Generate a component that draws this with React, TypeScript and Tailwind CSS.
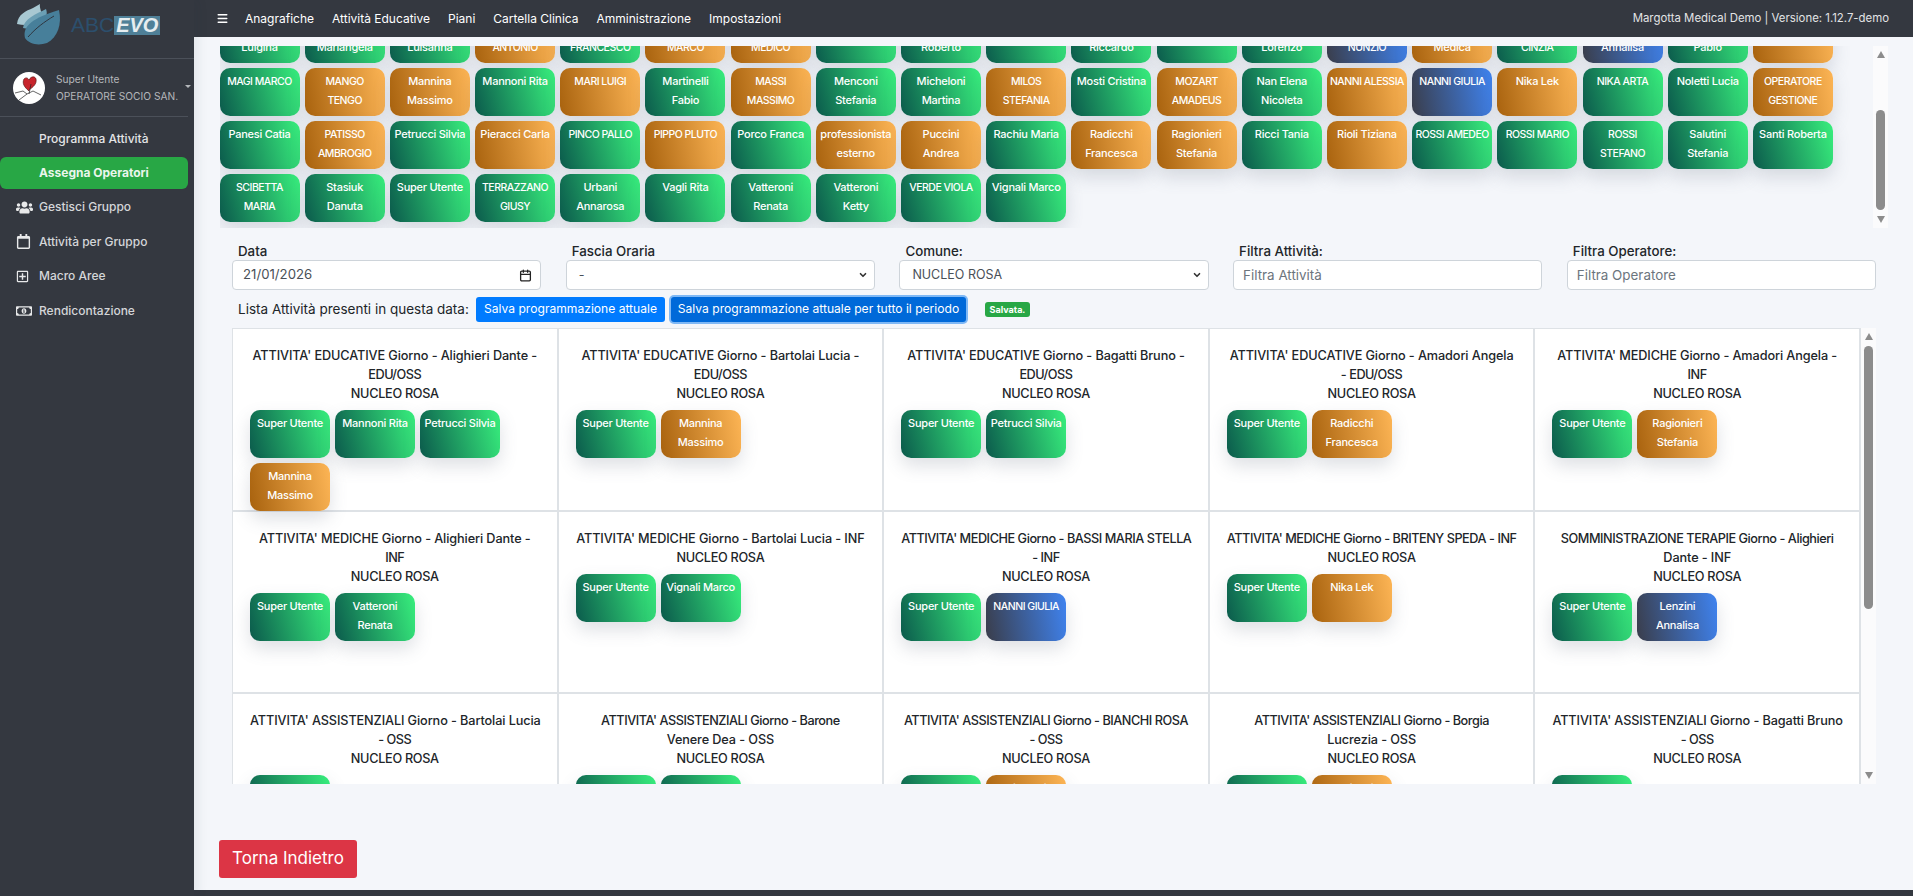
import React from "react";
import { Menu, Calendar, ChevronDown } from "lucide-react";
import { FaUsers, FaRegCalendar, FaRegPlusSquare, FaRegMoneyBillAlt } from "react-icons/fa";

type Tone = "g" | "o" | "b";
type Chip = { lines: string[]; tone: Tone };

const toneClass: Record<Tone, string> = {
  g: "bg-[linear-gradient(75deg,#0b5a4c,#38ef7d)]",
  o: "bg-[linear-gradient(80deg,#a8620e,#fdb555)]",
  b: "bg-[linear-gradient(80deg,#3a3d4a,#3f83f0)]",
};

const c = (text: string, tone: Tone = "g"): Chip => ({ lines: text.split("|"), tone });

const operatorRows: Chip[][] = [
  [
    c(" |Luigina"), c(" |Mariangela"), c(" |Luisanna"), c(" |ANTONIO", "o"), c(" |FRANCESCO"), c(" |MARCO", "o"),
    c(" |MEDICO", "o"), c(" | "), c(" |Roberto"), c(" | "), c(" |Riccardo"), c(" | "), c(" |Lorenzo"),
    c(" |NUNZIO", "b"), c(" |Medica", "o"), c(" |CINZIA"), c(" |Annalisa", "b"), c(" |Pablo"), c(" | ", "o"),
  ],
  [
    c("MAGI MARCO"), c("MANGO|TENGO", "o"), c("Mannina|Massimo", "o"), c("Mannoni Rita"), c("MARI LUIGI", "o"),
    c("Martinelli|Fabio"), c("MASSI|MASSIMO", "o"), c("Menconi|Stefania"), c("Micheloni|Martina"),
    c("MILOS|STEFANIA", "o"), c("Mosti Cristina"), c("MOZART|AMADEUS", "o"), c("Nan Elena|Nicoleta"),
    c("NANNI ALESSIA", "o"), c("NANNI GIULIA", "b"), c("Nika Lek", "o"), c("NIKA ARTA"), c("Noletti Lucia"),
    c("OPERATORE|GESTIONE", "o"),
  ],
  [
    c("Panesi Catia"), c("PATISSO|AMBROGIO", "o"), c("Petrucci Silvia"), c("Pieracci Carla", "o"), c("PINCO PALLO"),
    c("PIPPO PLUTO", "o"), c("Porco Franca"), c("professionista|esterno", "o"), c("Puccini|Andrea", "o"),
    c("Rachiu Maria"), c("Radicchi|Francesca", "o"), c("Ragionieri|Stefania", "o"), c("Ricci Tania"),
    c("Rioli Tiziana", "o"), c("ROSSI AMEDEO"), c("ROSSI MARIO"), c("ROSSI|STEFANO"), c("Salutini|Stefania"),
    c("Santi Roberta"),
  ],
  [
    c("SCIBETTA|MARIA"), c("Stasiuk|Danuta"), c("Super Utente"), c("TERRAZZANO|GIUSY"), c("Urbani|Annarosa"),
    c("Vagli Rita"), c("Vatteroni|Renata"), c("Vatteroni|Ketty"), c("VERDE VIOLA"), c("Vignali Marco"),
  ],
];

const su = c("Super Utente");

const activities: { title: string[]; chips: Chip[] }[] = [
  { title: ["ATTIVITA' EDUCATIVE Giorno - Alighieri Dante -", "EDU/OSS"], chips: [su, c("Mannoni Rita"), c("Petrucci Silvia"), c("Mannina|Massimo", "o")] },
  { title: ["ATTIVITA' EDUCATIVE Giorno - Bartolai Lucia -", "EDU/OSS"], chips: [su, c("Mannina|Massimo", "o")] },
  { title: ["ATTIVITA' EDUCATIVE Giorno - Bagatti Bruno -", "EDU/OSS"], chips: [su, c("Petrucci Silvia")] },
  { title: ["ATTIVITA' EDUCATIVE Giorno - Amadori Angela", "- EDU/OSS"], chips: [su, c("Radicchi|Francesca", "o")] },
  { title: ["ATTIVITA' MEDICHE Giorno - Amadori Angela -", "INF"], chips: [su, c("Ragionieri|Stefania", "o")] },
  { title: ["ATTIVITA' MEDICHE Giorno - Alighieri Dante -", "INF"], chips: [su, c("Vatteroni|Renata")] },
  { title: ["ATTIVITA' MEDICHE Giorno - Bartolai Lucia - INF"], chips: [su, c("Vignali Marco")] },
  { title: ["ATTIVITA' MEDICHE Giorno - BASSI MARIA STELLA", "- INF"], chips: [su, c("NANNI GIULIA", "b")] },
  { title: ["ATTIVITA' MEDICHE Giorno - BRITENY SPEDA - INF"], chips: [su, c("Nika Lek", "o")] },
  { title: ["SOMMINISTRAZIONE TERAPIE Giorno - Alighieri", "Dante - INF"], chips: [su, c("Lenzini|Annalisa", "b")] },
  { title: ["ATTIVITA' ASSISTENZIALI Giorno - Bartolai Lucia", "- OSS"], chips: [su] },
  { title: ["ATTIVITA' ASSISTENZIALI Giorno - Barone", "Venere Dea - OSS"], chips: [su, c("SOMMA|ELISA")] },
  { title: ["ATTIVITA' ASSISTENZIALI Giorno - BIANCHI ROSA", "- OSS"], chips: [su, c("Pieracci|Carla", "o")] },
  { title: ["ATTIVITA' ASSISTENZIALI Giorno - Borgia", "Lucrezia - OSS"], chips: [su, c("Radicchi|Francesca", "o")] },
  { title: ["ATTIVITA' ASSISTENZIALI Giorno - Bagatti Bruno", "- OSS"], chips: [su] },
];

// le maiuscole di Inter sono piu larghe di quelle dell'originale
const capsShare = (t: string) => t.replace(/[^A-Z]/g, "").length / t.length;

const OperatorChip: React.FC<{ chip: Chip }> = ({ chip }) => (
  <div
    className={`w-[80px] h-[48px] shrink-0 rounded-[10px] pt-[4px] text-center font-medium leading-[19px] text-white shadow-[0_8px_18px_rgba(90,100,120,0.2)] whitespace-nowrap overflow-hidden ${toneClass[chip.tone]}`}
  >
    {chip.lines.map((l, i) => (
      <div
        key={i}
        className={capsShare(l) > 0.6 ? "h-[19px] text-[10.5px] tracking-[-0.5px]" : "h-[19px] text-[11px] tracking-[-0.25px]"}
      >
        {l}
      </div>
    ))}
  </div>
);

const FakeScrollbar: React.FC<{ before: string; thumb: string }> = ({ before, thumb }) => (
  <div className="w-[15px] shrink-0 bg-[#fbfbfc] flex flex-col items-center pt-[5px] pb-[5px]">
    <div className="w-0 h-0 shrink-0 border-x-[4.5px] border-x-transparent border-b-[7px] border-b-[#8c8c8c]" />
    <div className={`${before} w-full shrink-0`} />
    <div className={`${thumb} w-[9px] shrink-0 rounded-full bg-[#8c8c8c]`} />
    <div className="flex-1" />
    <div className="w-0 h-0 shrink-0 border-x-[4.5px] border-x-transparent border-t-[7px] border-t-[#8c8c8c]" />
  </div>
);

const Logo = () => (
  <div className="h-[59px] flex items-start pl-[16px] pt-[2px] gap-[9px] border-b border-[#4b5059]">
    <svg width="46" height="44" viewBox="0 0 46 44">
      <path d="M1 22C2 12 10 9 17 6l7-4c-1 5 3 7 0 14-5 8-15 8-23 6z" fill="#a8c8d2" />
      <path d="M7 26C8 17 20 12 30 7c2 5 0 10-5 15-6 5-12 5-18 4z" fill="#6b9fb4" />
      <path d="M9 36c-3-12 8-20 34-28 3 14-1 27-12 33-9 3-18 1-22-5z" fill="#477f9a" />
      <path d="M12 35c8-9 16-15 26-21" stroke="#2f3640" strokeWidth="1" fill="none" />
    </svg>
    <div className="flex items-center mt-[12px] font-['Liberation_Sans',sans-serif]">
      <span className="text-[21px] leading-[22px] font-light text-[#2c4f6d]">ABC</span>
      <span className="bg-[#4f8098] h-[19px] px-[2px] text-[20px] leading-[19px] font-bold italic text-[#e6edf0]">EVO</span>
    </div>
  </div>
);

const Avatar = () => (
  <svg width="32" height="32" viewBox="0 0 32 32" className="shrink-0 rounded-full bg-white">
    <path d="M16 19C11 15 9 11 11 7c2-2 4-1 5 1 2-4 6-4 7-1 1 5-3 8-7 11z" fill="#c8242c" stroke="#5a1a1a" strokeWidth="0.7" />
    <path d="M2 21l8-2 4 3-8 6M14 22l6-3 8 4M18 12l-2 10" stroke="#222" strokeWidth="0.7" fill="none" />
  </svg>
);

const navItems = [
  { label: "Gestisci Gruppo", icon: <FaUsers size={17} /> },
  { label: "Attività per Gruppo", icon: <FaRegCalendar size={15} /> },
  { label: "Macro Aree", icon: <FaRegPlusSquare size={13} /> },
  { label: "Rendicontazione", icon: <FaRegMoneyBillAlt size={16} /> },
];

const Sidebar = () => (
  <aside className="w-[194px] shrink-0 bg-[#343840] text-white shadow-[4px_0_10px_rgba(40,45,60,0.08)] z-10">
    <Logo />
    <div className="h-[58px] mr-[6px] flex items-center pl-[13px] gap-[11px] border-b border-[#4b5059] relative">
      <Avatar />
      <div className="text-[10.2px] leading-[17px] text-[#b4b7bb] whitespace-nowrap">
        <div>Super Utente</div>
        <div>OPERATORE SOCIO SAN.</div>
      </div>
      <span className="absolute right-[-3px] top-[26px] w-0 h-0 border-x-[3px] border-x-transparent border-t-[3px] border-t-[#b4b7bb]" />
    </div>
    <div className="mr-[6px] text-[12px] font-medium text-[#e4e5e7] whitespace-nowrap">
      <div className="h-[32px] mt-[6px] pl-[39px] flex items-center">Programma Attività</div>
      <div className="h-[32px] mt-[2px] mb-[1px] pl-[39px] flex items-center rounded-md bg-[#28a745] font-bold text-[#eaf6ec]">Assegna Operatori</div>
      {navItems.map((item) => (
        <div key={item.label} className="h-[34.5px] flex items-center">
          <span className="w-[39px] pl-[16px] flex items-center text-[#e8e9ea]">{item.icon}</span>
          <span className="text-[#d4d6d9]">{item.label}</span>
        </div>
      ))}
    </div>
  </aside>
);

const Header = () => (
  <header className="h-[37px] shrink-0 bg-[#343840] flex items-center pl-[22px] pr-[24px] text-white whitespace-nowrap">
    <Menu size={13} strokeWidth={2.5} className="mr-[16px]" />
    <nav className="flex gap-[18px] text-[12px]">
      {["Anagrafiche", "Attività Educative", "Piani", "Cartella Clinica", "Amministrazione", "Impostazioni"].map((n) => (
        <span key={n}>{n}</span>
      ))}
    </nav>
    <span className="ml-auto text-[11.4px] text-[#e2e3e5]">Margotta Medical Demo | Versione: 1.12.7-demo</span>
  </header>
);

const fieldClass =
  "h-[30px] w-full rounded-[4px] border border-[#ced4da] bg-white px-[12px] text-[12.5px] text-[#495057]";

const Field: React.FC<{ label: string; children: React.ReactNode }> = ({ label, children }) => (
  <div>
    <label className="block pl-[6px] h-[20px] text-[13.3px] leading-[22px] font-medium text-[#212529]">{label}</label>
    {children}
  </div>
);

export default function App() {
  return (
    <div className="h-[896px] w-[1913px] flex overflow-hidden bg-[#f4f6fa] font-['Inter',sans-serif]">
      <Sidebar />
      <main className="flex-1 min-w-0 flex flex-col">
        <Header />
        <div className="flex-1 min-h-0 pl-[25.5px] pr-[23px] pt-[9px]">
          {/* griglia operatori, scrollata come nell'originale */}
          <div className="h-[182px] flex overflow-hidden mr-[2px]">
            <div className="flex-1 min-w-0 overflow-hidden">
              <div className="-mt-[31px] flex flex-col gap-[5px]">
                {operatorRows.map((row, i) => (
                  <div key={i} className="flex gap-[5.2px]">
                    {row.map((chip, j) => (
                      <OperatorChip key={j} chip={chip} />
                    ))}
                  </div>
                ))}
              </div>
            </div>
            <FakeScrollbar before="h-[52px]" thumb="h-[100px]" />
          </div>

          <div className="ml-[12.5px] mr-[14px]">
            <div className="grid grid-cols-5 gap-x-[24.5px] mt-[12px]">
              <Field label="Data">
                <div className={`${fieldClass} flex items-center justify-between !pl-[10px] pr-[8px] !text-[13.2px] text-[#3c4149]`}>
                  <span>21/01/2026</span>
                  <Calendar size={13} strokeWidth={2.4} className="text-[#222]" />
                </div>
              </Field>
              <Field label="Fascia Oraria">
                <div className={`${fieldClass} flex items-center justify-between pr-[6px]`}>
                  <span>-</span>
                  <ChevronDown size={10} strokeWidth={4} className="text-[#333]" />
                </div>
              </Field>
              <Field label="Comune:">
                <div className={`${fieldClass} flex items-center justify-between pr-[6px]`}>
                  <span>NUCLEO ROSA</span>
                  <ChevronDown size={10} strokeWidth={4} className="text-[#333]" />
                </div>
              </Field>
              <Field label="Filtra Attività:">
                <input className={`${fieldClass} !px-[9px] !text-[13.4px] placeholder:text-[#6c757d]`} placeholder="Filtra Attività" />
              </Field>
              <Field label="Filtra Operatore:">
                <input className={`${fieldClass} !px-[9px] !text-[13.4px] placeholder:text-[#6c757d]`} placeholder="Filtra Operatore" />
              </Field>
            </div>

            <div className="flex items-center h-[25px] mt-[7px] pl-[6px] text-[13.5px] text-[#212529] whitespace-nowrap">
              <span className="w-[238px]">Lista Attività presenti in questa data:</span>
              <button className="h-[25px] w-[189px] rounded-[3px] bg-[#007bff] text-white text-[12.1px]">Salva programmazione attuale</button>
              <button className="h-[25px] w-[295px] ml-[6px] rounded-[3px] bg-[#0069d9] text-white text-[12.1px] ring-[2px] ring-[#7fb8f5]">
                Salva programmazione attuale per tutto il periodo
              </button>
              <span className="ml-[19px] h-[15px] w-[45px] rounded-[3px] bg-[#28a745] text-white text-[9px] leading-[15px] text-center font-bold">Salvata.</span>
            </div>

            {/* griglia attività */}
            <div className="mt-[6px] h-[456px] flex overflow-hidden">
              <div className="flex-1 min-w-0 grid grid-cols-5 auto-rows-[182.5px] border-l-[1px] border-t-[1px] border-[#dee2e6] bg-white overflow-hidden">
                {activities.map((a, i) => (
                  <div key={i} className="border-r-[2px] border-b-[2.5px] border-[#dee2e6] pt-[17px] px-[17px]">
                    <div className="text-center text-[12.7px] leading-[19px] font-medium tracking-[-0.1px] text-[#212529] whitespace-nowrap">
                      {a.title.map((t) => (
                        <div key={t} className={capsShare(t) > 0.55 ? "tracking-[-0.45px]" : ""}>
                          {t}
                        </div>
                      ))}
                      <div className="tracking-[-0.3px]">NUCLEO ROSA</div>
                    </div>
                    <div className="mt-[7px] flex flex-wrap gap-[5px]">
                      {a.chips.map((chip, j) => (
                        <OperatorChip key={j} chip={chip} />
                      ))}
                    </div>
                  </div>
                ))}
              </div>
              <FakeScrollbar before="h-[6px]" thumb="h-[263px]" />
            </div>

            <button className="mt-[56px] -ml-[13px] block h-[38px] w-[138px] rounded-[3px] bg-[#dc3545] text-white text-[17px]">Torna Indietro</button>
          </div>
        </div>
        <div className="h-[6px] shrink-0 bg-[#343840]" />
      </main>
    </div>
  );
}
